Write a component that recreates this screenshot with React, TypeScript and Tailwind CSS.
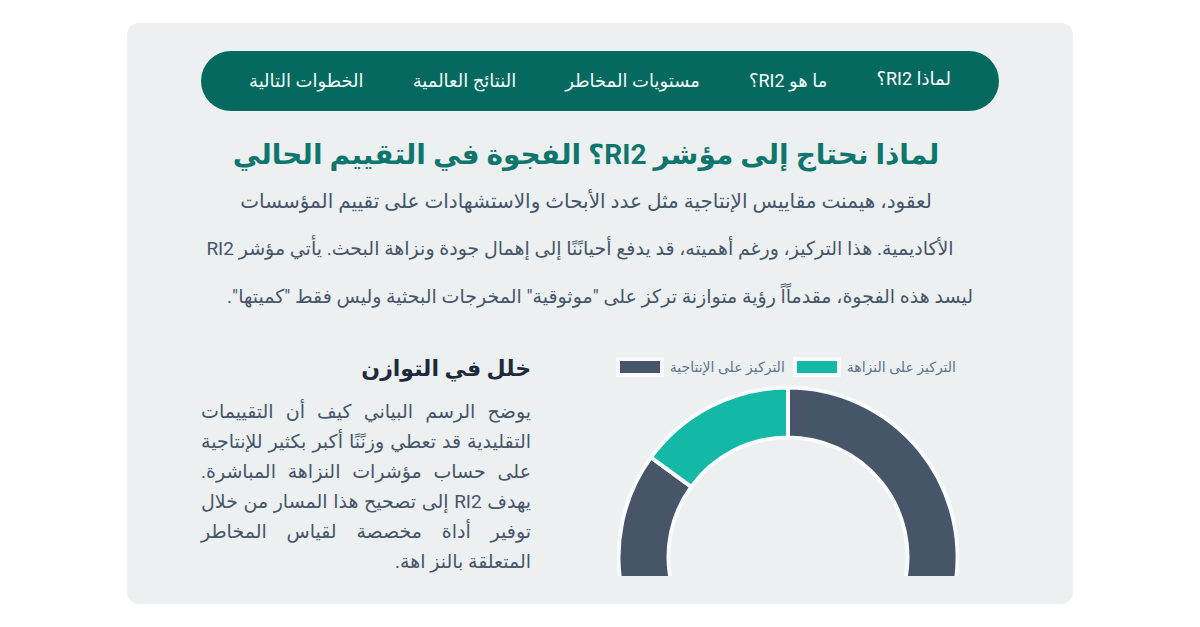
const navItems = [
  { label: "لماذا RI2؟", active: true },
  { label: "ما هو RI2؟", active: false },
  { label: "مستويات المخاطر", active: false },
  { label: "النتائج العالمية", active: false },
  { label: "الخطوات التالية", active: false },
];

const legend = [
  { label: "التركيز على النزاهة", swatch: "bg-[#14b8a6]" },
  { label: "التركيز على الإنتاجية", swatch: "bg-[#475569]" },
];

const lines = [
  "يوضح الرسم البياني كيف أن التقييمات",
  "التقليدية قد تعطي وزنًنًا أكبر بكثير للإنتاجية",
  "على حساب مؤشرات النزاهة المباشرة.",
  "يهدف RI2 إلى تصحيح هذا المسار من خلال",
  "توفير أداة مخصصة لقياس المخاطر",
];

function BalanceChart() {
  return (
    <svg viewBox="0 0 342 191" className="block w-full" role="img" aria-label="التركيز على النزاهة 15، التركيز على الإنتاجية 85">
      <g stroke="#f8fafc" strokeWidth="4">
        <path fill="#475569" d="M171 2.5A169.5 169.5 0 1 1 33.9 72.4L74.3 101.8A119.5 119.5 0 1 0 171 52.5Z" />
        <path fill="#14b8a6" d="M33.9 72.4A169.5 169.5 0 0 1 171 2.5V52.5A119.5 119.5 0 0 0 74.3 101.8Z" />
      </g>
    </svg>
  );
}

export default function App() {
  return (
    <div dir="rtl" lang="ar" className="min-h-screen bg-white py-[23px] font-['Roboto','DejaVu_Sans',sans-serif]">
      <main className="mx-auto w-full max-w-[946px] rounded-xl bg-[#ecf0f1] px-[74px] pt-7 pb-[27px]">
        <nav className="flex h-[60px] items-center justify-between rounded-full bg-[#06695f] px-12 text-lg whitespace-nowrap">
          {navItems.map((item) => (
            <a key={item.label} href="#" className={item.active ? "pb-1 text-white" : "text-teal-50"}>
              {item.label}
            </a>
          ))}
        </nav>

        <header className="mt-[22px] text-center whitespace-nowrap">
          <h1 className="pr-7 text-[28px] leading-[44px] font-bold text-[#0f766e]">
            لماذا نحتاج إلى مؤشر RI2؟ الفجوة في التقييم الحالي
          </h1>
          <div className="text-[19px] leading-[48px] text-[#475569]">
            <p className="pr-7 text-xl leading-[48px]">
              لعقود، هيمنت مقاييس الإنتاجية مثل عدد الأبحاث والاستشهادات على تقييم المؤسسات
            </p>
            <p className="pr-10">
              الأكاديمية. هذا التركيز، ورغم أهميته، قد يدفع أحيانًنًا إلى إهمال جودة ونزاهة البحث. يأتي مؤشر RI2
            </p>
            <p>
              ليسد هذه الفجوة، مقدماًاً رؤية متوازنة تركز على "موثوقية" المخرجات البحثية وليس فقط "كميتها".
            </p>
          </div>
        </header>

        <div className="mt-8 flex justify-between pr-10">
          <section className="w-[342px] pt-1">
            <ul className="flex h-5 gap-2 px-[3px] text-sm whitespace-nowrap text-slate-500">
              {legend.map((item) => (
                <li key={item.label} className="flex items-center gap-1.5">
                  <span>{item.label}</span>
                  <span className={`h-5 w-12 border-4 border-slate-50 ${item.swatch}`} />
                </li>
              ))}
            </ul>
            <div className="mt-2">
              <BalanceChart />
            </div>
          </section>
          <section className="w-[330px] whitespace-nowrap">
            <h2 className="text-[22px] leading-8 font-bold text-[#1e293b]">خلل في التوازن</h2>
            <p className="mt-3 text-[19px] leading-[30px] text-[#475569]">
              {lines.map((line) => (
                <span key={line} className="block [text-align-last:justify]">{line}</span>
              ))}
              <span className="block">المتعلقة بالنز اهة.</span>
            </p>
          </section>
        </div>
      </main>
    </div>
  );
}
